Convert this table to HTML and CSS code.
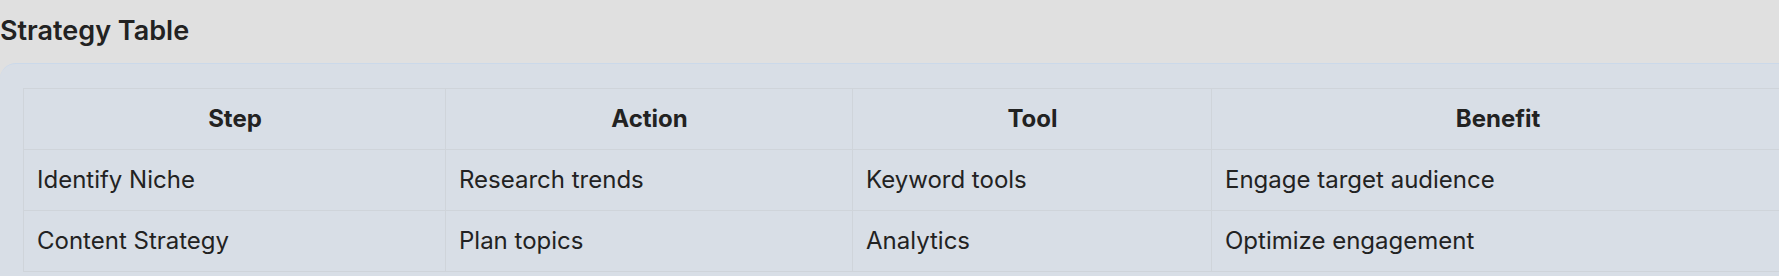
FILE: index.html
```html
<!DOCTYPE html>
<html lang="en">
<head>
<meta charset="utf-8">
<title>Strategy Table</title>
<link rel="stylesheet" href="styles.css">
</head>
<body>
<h2 class="title">Strategy Table</h2>
<div class="card">
  <table class="strategy">
    <colgroup>
      <col class="c1"><col class="c2"><col class="c3"><col class="c4">
    </colgroup>
    <thead>
      <tr><th>Step</th><th>Action</th><th>Tool</th><th>Benefit</th></tr>
    </thead>
    <tbody>
      <tr><td>Identify Niche</td><td>Research trends</td><td>Keyword tools</td><td>Engage target audience</td></tr>
      <tr><td>Content Strategy</td><td>Plan topics</td><td>Analytics</td><td>Optimize engagement</td></tr>
    </tbody>
  </table>
</div>
</body>
</html>
```

FILE: styles.css
```css
html, body {
  margin: 0;
  padding: 0;
  overflow: hidden;
}
body {
  background: #e0e0e0;
  font-family: Inter, "Noto Sans", sans-serif;
  color: #222222;
}
.title {
  margin: 0;
  padding-top: 11px;
  font-size: 27px;
  line-height: 40px;
  font-weight: 600;
  color: #222222;
  height: 63px;
  box-sizing: border-box;
}
.card {
  width: 1807px;
  background: #d8dee6;
  border-top: 1px solid #cbd9ea;
  border-radius: 16px;
  padding: 24px 24px 24px 23px;
  box-sizing: border-box;
}
.strategy {
  border-collapse: collapse;
  table-layout: fixed;
  width: 1759px;
  font-size: 24px;
  line-height: 36px;
}
.c1 { width: 422px; }
.c2 { width: 407px; }
.c3 { width: 359px; }
.c4 { width: 572px; }
.strategy th,
.strategy td {
  border: 1px solid #cfd4da;
  padding: 12px 12px 12px 13px;
}
.strategy th {
  font-weight: 700;
  text-align: center;
}
.strategy td {
  text-align: left;
  font-weight: 400;
}
```
